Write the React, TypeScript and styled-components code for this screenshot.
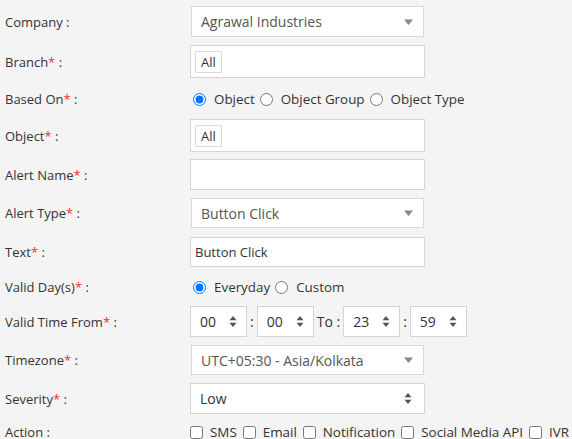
import React from 'react';
import styled, { createGlobalStyle } from 'styled-components';

const GlobalStyle = createGlobalStyle`
  html, body {
    margin: 0;
    padding: 0;
    background: #f4f4f4;
  }
  body {
    font-family: "Open Sans", "Liberation Sans", sans-serif;
    color: #333;
  }
`;

const Form = styled.div`
  padding: 6px 0 0 5px;
  width: 567px;
`;

const Row = styled.div<{ $h?: number; $gap?: number }>`
  display: grid;
  grid-template-columns: 185px 1fr;
  align-items: center;
  height: ${(p) => p.$h ?? 31}px;
  margin-bottom: ${(p) => p.$gap ?? 8}px;
`;

const Label = styled.div`
  font-size: 13px;
  color: #333;
  white-space: nowrap;
`;

const Star = styled.span`
  color: #ff2a2a;
`;

const FakeSelect = styled.div`
  box-sizing: border-box;
  width: 233px;
  height: 100%;
  margin-left: 1px;
  background: #fff;
  border: 1px solid #d8d8d8;
  display: flex;
  align-items: center;
  padding: 0 10px 0 9px;
  font-size: 14px;
  color: #555;
`;

const SelectText = styled.span`
  flex: 1;
`;

const TagBox = styled.div`
  box-sizing: border-box;
  width: 235px;
  height: 100%;
  background: #fff;
  border: 1px solid #d4d4d4;
  display: flex;
  align-items: center;
  padding-left: 4px;
`;

const Tag = styled.span`
  box-sizing: border-box;
  height: 22px;
  padding: 0 5px;
  border: 1px solid #dcdcdc;
  font-size: 13px;
  line-height: 20px;
  color: #333;
`;

const TextBox = styled.div`
  box-sizing: border-box;
  width: 235px;
  height: 100%;
  background: #fff;
  border: 1px solid #d4d4d4;
  display: flex;
  align-items: center;
  padding-left: 4px;
  font-size: 13px;
  color: #333;
`;

const NativeSelect = styled(TextBox)`
  padding: 0 12px 0 9px;
  font-size: 14px;
`;

const Options = styled.div`
  display: flex;
  align-items: center;
  font-size: 13.4px;
  color: #333;
  white-space: nowrap;
`;

const Opt = styled.label<{ $box?: boolean }>`
  display: inline-flex;
  align-items: center;
  margin-right: ${(p) => (p.$box ? 6 : 2)}px;
  input {
    margin: 0 ${(p) => (p.$box ? 7 : 8)}px 0 ${(p) => (p.$box ? 0 : 3)}px;
    width: 13px;
    height: 13px;
  }
`;

const Time = styled.div`
  display: flex;
  align-items: center;
  height: 100%;
  font-size: 14px;
`;

const TimeBox = styled.div`
  box-sizing: border-box;
  width: 57px;
  height: 100%;
  background: #fff;
  border: 1px solid #d4d4d4;
  display: flex;
  align-items: center;
  padding: 0 9px 0 9px;
  font-size: 14px;
  color: #333;
`;

const Sep = styled.span`
  margin: 0 3px;
  color: #333;
`;

const DownArrow = () => (
  <svg width="9" height="6" viewBox="0 0 9 6">
    <path d="M0 0.5h9L4.5 6z" fill="#888" />
  </svg>
);

const Spinner = () => (
  <svg width="8" height="11" viewBox="0 0 8 11">
    <path d="M4 0L7.5 4.2H0.5z M4 11L0.5 6.8H7.5z" fill="#555" />
  </svg>
);

const Select = ({ value }: { value: string }) => (
  <FakeSelect>
    <SelectText>{value}</SelectText>
    <DownArrow />
  </FakeSelect>
);

const TimeField = ({ value }: { value: string }) => (
  <TimeBox>
    <SelectText>{value}</SelectText>
    <Spinner />
  </TimeBox>
);

const Req = ({ children }: { children: React.ReactNode }) => (
  <Label>
    {children}
    <Star>*</Star> :
  </Label>
);

const actions = ['SMS', 'Email', 'Notification', 'Social Media API', 'IVR'];

export default function App() {
  return (
    <>
      <GlobalStyle />
      <Form>
        <Row>
          <Label>Company :</Label>
          <Select value="Agrawal Industries" />
        </Row>
        <Row $h={33}>
          <Req>Branch</Req>
          <TagBox>
            <Tag>All</Tag>
          </TagBox>
        </Row>
        <Row $h={26} $gap={7}>
          <Req>Based On</Req>
          <Options>
            <Opt>
              <input type="radio" name="based" defaultChecked />
              Object
            </Opt>
            <Opt>
              <input type="radio" name="based" />
              Object Group
            </Opt>
            <Opt>
              <input type="radio" name="based" />
              Object Type
            </Opt>
          </Options>
        </Row>
        <Row $h={33} $gap={7}>
          <Req>Object</Req>
          <TagBox>
            <Tag>All</Tag>
          </TagBox>
        </Row>
        <Row $h={31}>
          <Req>Alert Name</Req>
          <TextBox />
        </Row>
        <Row $h={30} $gap={9}>
          <Req>Alert Type</Req>
          <Select value="Button Click" />
        </Row>
        <Row $h={30}>
          <Req>Text</Req>
          <TextBox>Button Click</TextBox>
        </Row>
        <Row $h={24} $gap={7}>
          <Req>Valid Day(s)</Req>
          <Options>
            <Opt>
              <input type="radio" name="days" defaultChecked />
              Everyday
            </Opt>
            <Opt>
              <input type="radio" name="days" />
              Custom
            </Opt>
          </Options>
        </Row>
        <Row $h={31}>
          <Req>Valid Time From</Req>
          <Time>
            <TimeField value="00" />
            <Sep>:</Sep>
            <TimeField value="00" />
            <Sep>To :</Sep>
            <TimeField value="23" />
            <Sep>:</Sep>
            <TimeField value="59" />
          </Time>
        </Row>
        <Row $h={30}>
          <Req>Timezone</Req>
          <Select value="UTC+05:30 - Asia/Kolkata" />
        </Row>
        <Row $h={31} $gap={7}>
          <Req>Severity</Req>
          <NativeSelect>
            <SelectText>Low</SelectText>
            <Spinner />
          </NativeSelect>
        </Row>
        <Row $h={22} $gap={0}>
          <Label>Action :</Label>
          <Options>
            {actions.map((a) => (
              <Opt key={a} $box>
                <input type="checkbox" />
                {a}
              </Opt>
            ))}
          </Options>
        </Row>
      </Form>
    </>
  );
}
